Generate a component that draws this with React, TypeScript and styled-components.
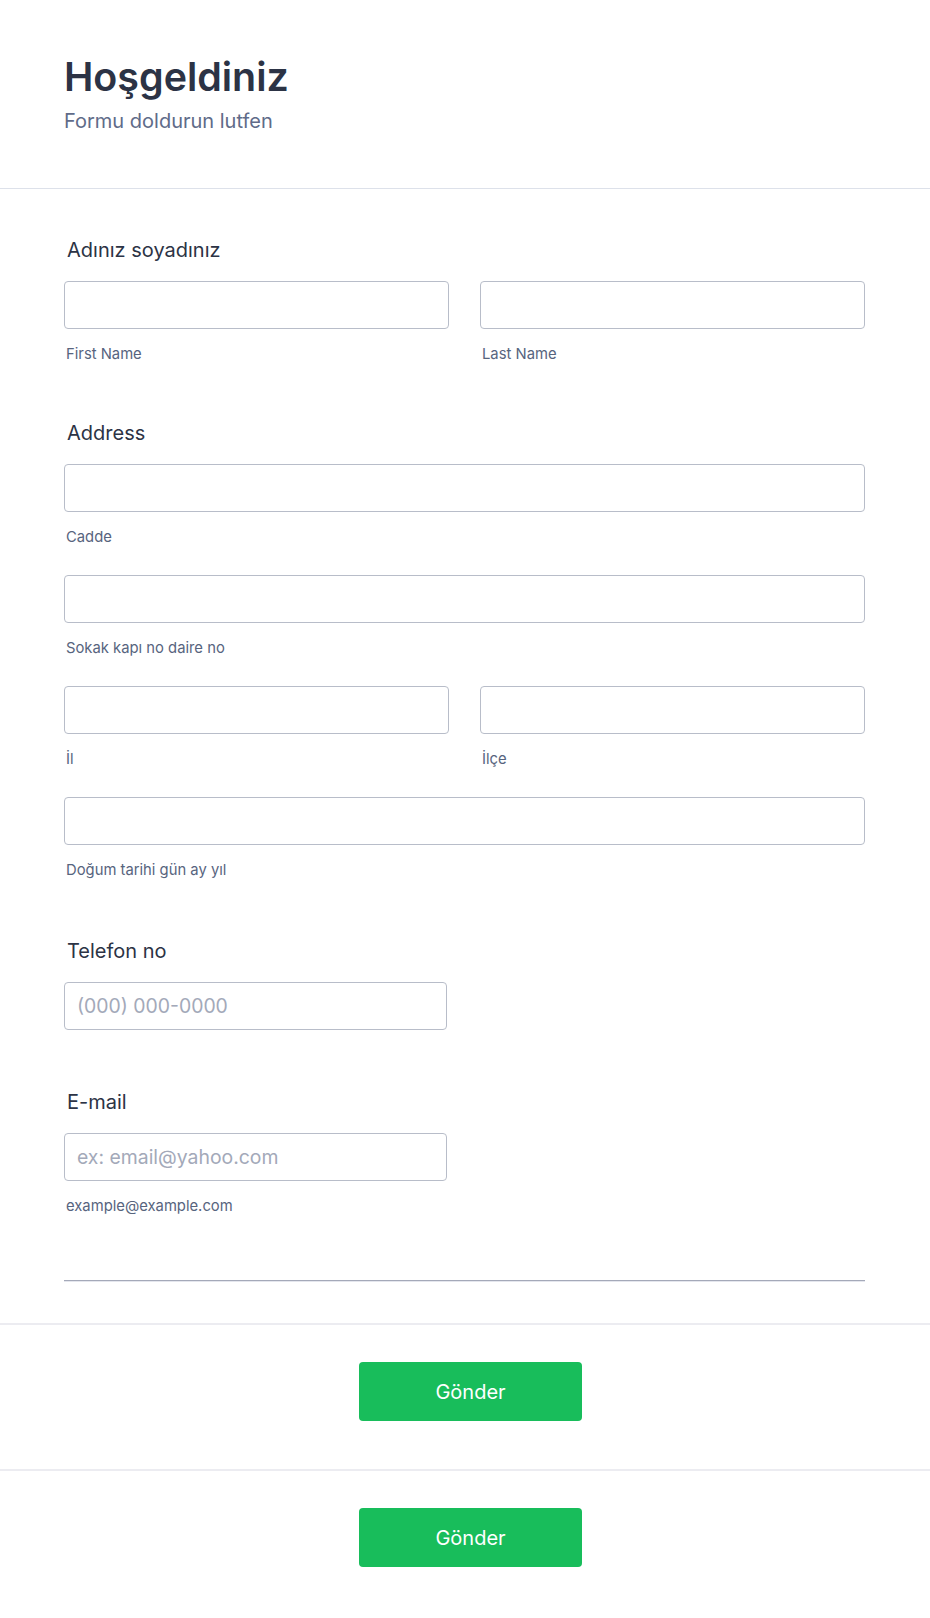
import React from 'react';
import styled, { createGlobalStyle } from 'styled-components';

const GlobalStyle = createGlobalStyle`
  html, body {
    margin: 0;
    padding: 0;
    background: #ffffff;
    font-family: Inter, 'Noto Sans', sans-serif;
  }
  * {
    box-sizing: border-box;
  }
`;

const Page = styled.div`
  width: 930px;
  background: #ffffff;
`;

const Header = styled.header`
  padding: 53px 62px 55px 64px;
  border-bottom: 1px solid #dde1ea;
`;

const Title = styled.h1`
  margin: 0;
  font-size: 39.4px;
  line-height: 48px;
  font-weight: 600;
  color: #2c3345;
`;

const Subtitle = styled.p`
  margin: 8px 0 0;
  font-size: 20px;
  line-height: 24px;
  color: #606b89;
`;

const FormBody = styled.div`
  padding: 49px 65px 41px 64px;
`;

const FieldList = styled.div`
  display: flex;
  flex-direction: column;
`;

const Field = styled.div<{ $space: number }>`
  display: flex;
  flex-direction: column;
  margin-top: ${(p) => p.$space}px;
`;

const Label = styled.label`
  display: block;
  padding-left: 3px;
  margin-bottom: 19px;
  font-size: 20px;
  line-height: 24px;
  font-weight: 400;
  color: #2c3345;
`;

const Rows = styled.div`
  display: flex;
  flex-direction: column;
  gap: 29px;
`;

const Row = styled.div<{ $cols: number }>`
  display: grid;
  grid-template-columns: repeat(${(p) => p.$cols}, 1fr);
  column-gap: 31px;
`;

const Cell = styled.div`
  display: flex;
  flex-direction: column;
`;

const Input = styled.input<{ $half?: boolean }>`
  width: ${(p) => (p.$half ? '383px' : '100%')};
  height: 48px;
  padding: 0 12px;
  border: 1px solid #b8bdc9;
  border-radius: 4px;
  background: #ffffff;
  font-family: Inter, sans-serif;
  font-size: 19.4px;
  color: #2c3345;
  outline: none;

  &::placeholder {
    color: #a3a9b9;
  }
`;

const SubLabel = styled.span`
  display: block;
  margin-top: 16px;
  padding-left: 2px;
  font-size: 14.8px;
  line-height: 18px;
  color: #57647e;
`;

const Divider = styled.div`
  margin-top: 65px;
  border-top: 1px solid #a4a9b9;
  border-bottom: 1px solid #e4e6ed;
`;

const ButtonSection = styled.div`
  display: flex;
  justify-content: center;
  padding: 37px 0 48px 11px;
  border-top: 2px solid #ececf1;
`;

const SubmitButton = styled.button`
  width: 223px;
  height: 59px;
  border: none;
  border-radius: 4px;
  background: #18bd5b;
  color: #ffffff;
  font-family: Inter, sans-serif;
  font-size: 20px;
  font-weight: 400;
  cursor: pointer;
`;

interface Part {
  sub?: string;
  placeholder?: string;
}

interface FieldDef {
  label: string;
  space: number;
  half?: boolean;
  rows: Part[][];
}

const fields: FieldDef[] = [
  { label: 'Adınız soyadınız', space: 0, rows: [[{ sub: 'First Name' }, { sub: 'Last Name' }]] },
  {
    label: 'Address',
    space: 58,
    rows: [
      [{ sub: 'Cadde' }],
      [{ sub: 'Sokak kapı no daire no' }],
      [{ sub: 'İl' }, { sub: 'İlçe' }],
      [{ sub: 'Doğum tarihi gün ay yıl' }],
    ],
  },
  { label: 'Telefon no', space: 60, half: true, rows: [[{ placeholder: '(000) 000-0000' }]] },
  {
    label: 'E-mail',
    space: 60,
    half: true,
    rows: [[{ placeholder: 'ex: email@yahoo.com', sub: 'example@example.com' }]],
  },
];

export default function App() {
  return (
    <Page>
      <GlobalStyle />
      <Header>
        <Title>Hoşgeldiniz</Title>
        <Subtitle>Formu doldurun lutfen</Subtitle>
      </Header>

      <FormBody>
        <FieldList>
          {fields.map((field) => (
            <Field key={field.label} $space={field.space}>
              <Label>{field.label}</Label>
              <Rows>
                {field.rows.map((row, i) => (
                  <Row key={i} $cols={row.length}>
                    {row.map((part, j) => (
                      <Cell key={j}>
                        <Input $half={field.half} placeholder={part.placeholder} />
                        {part.sub ? <SubLabel>{part.sub}</SubLabel> : null}
                      </Cell>
                    ))}
                  </Row>
                ))}
              </Rows>
            </Field>
          ))}
        </FieldList>
        <Divider />
      </FormBody>

      <ButtonSection>
        <SubmitButton>Gönder</SubmitButton>
      </ButtonSection>
      <ButtonSection>
        <SubmitButton>Gönder</SubmitButton>
      </ButtonSection>
    </Page>
  );
}
